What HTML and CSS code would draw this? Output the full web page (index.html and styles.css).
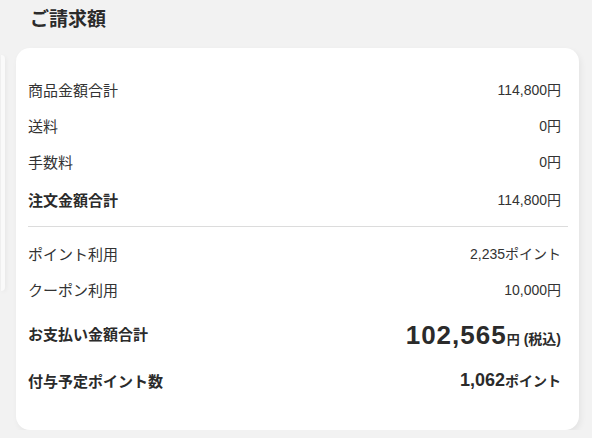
FILE: index.html
```html
<!DOCTYPE html>
<html lang="ja">
<head>
    <meta charset="UTF-8">
    <meta name="viewport" content="width=device-width, initial-scale=1.0">
    <title>ご請求額</title>
    <link rel="stylesheet" href="styles.css">
</head>
<body>
    <h2 class="page-title">ご請求額</h2>
    <div class="cards">
        <div class="card-peek"></div>
        <div class="card">
            <div class="section">
                <div class="row">
                    <span class="label">商品金額合計</span>
                    <span class="value">114,800円</span>
                </div>
                <div class="row">
                    <span class="label">送料</span>
                    <span class="value">0円</span>
                </div>
                <div class="row">
                    <span class="label">手数料</span>
                    <span class="value">0円</span>
                </div>
                <div class="row row-sum">
                    <span class="label bold">注文金額合計</span>
                    <span class="value">114,800円</span>
                </div>
            </div>
            <div class="section section-bottom">
                <div class="row">
                    <span class="label">ポイント利用</span>
                    <span class="value">2,235ポイント</span>
                </div>
                <div class="row">
                    <span class="label">クーポン利用</span>
                    <span class="value">10,000円</span>
                </div>
                <div class="row row-pay">
                    <span class="label bold">お支払い金額合計</span>
                    <span class="pay-value">
                        <span class="pay-num">102,565</span><span class="pay-yen">円</span><span class="pay-tax">(税込)</span>
                    </span>
                </div>
                <div class="row row-point">
                    <span class="label bold">付与予定ポイント数</span>
                    <span class="point-value">
                        <span class="point-num">1,062</span><span class="point-unit">ポイント</span>
                    </span>
                </div>
            </div>
        </div>
    </div>
</body>
</html>
```

FILE: styles.css
```css
body {
    font-family: "Liberation Sans", "Noto Sans CJK JP", sans-serif;
    background-color: #f2f2f2;
    color: #333;
    margin: 0;
    padding: 0;
}
.page-title {
    font-size: 19px;
    line-height: 24px;
    font-weight: bold;
    color: #2b2b2b;
    margin: 0 0 16px 0;
    padding: 8px 0 0 30px;
}
.cards {
    display: flex;
    align-items: flex-start;
    gap: 11px;
}
.card-peek {
    width: 4px;
    height: 236px;
    margin-top: 7px;
    margin-left: 1px;
    background-color: #fafafa;
    border-radius: 0 10px 10px 0;
    box-shadow: 1px 1px 4px rgba(0,0,0,0.05);
}
.card {
    width: 563px;
    box-sizing: border-box;
    background-color: #fff;
    border-radius: 14px;
    padding: 23px 11px 32px 12px;
    box-shadow: 2px 3px 6px rgba(0,0,0,0.06);
}
.section {
    padding-bottom: 9px;
    border-bottom: 1px solid #dcdcdc;
}
.section-bottom {
    border-bottom: none;
    padding-top: 8px;
    padding-bottom: 0;
}
.row {
    display: flex;
    justify-content: space-between;
    align-items: center;
    height: 36px;
    padding-right: 7px;
}
.row-sum {
    margin-top: 2px;
}
.row-pay {
    height: 44px;
    margin-top: 4px;
}
.row-point {
    margin-top: 7px;
}
.label {
    font-size: 15px;
    color: #333;
}
.bold {
    font-weight: bold;
    color: #2b2b2b;
}
.value {
    font-size: 14px;
    color: #333;
}
.pay-value {
    font-weight: bold;
    color: #2b2b2b;
    white-space: nowrap;
    padding-top: 4px;
}
.pay-num {
    font-size: 26px;
    letter-spacing: 1px;
}
.pay-yen {
    font-size: 13px;
}
.pay-tax {
    font-size: 14px;
    margin-left: 4px;
}
.point-value {
    font-weight: bold;
    color: #2b2b2b;
}
.point-num {
    font-size: 18px;
}
.point-unit {
    font-size: 14px;
}
```
